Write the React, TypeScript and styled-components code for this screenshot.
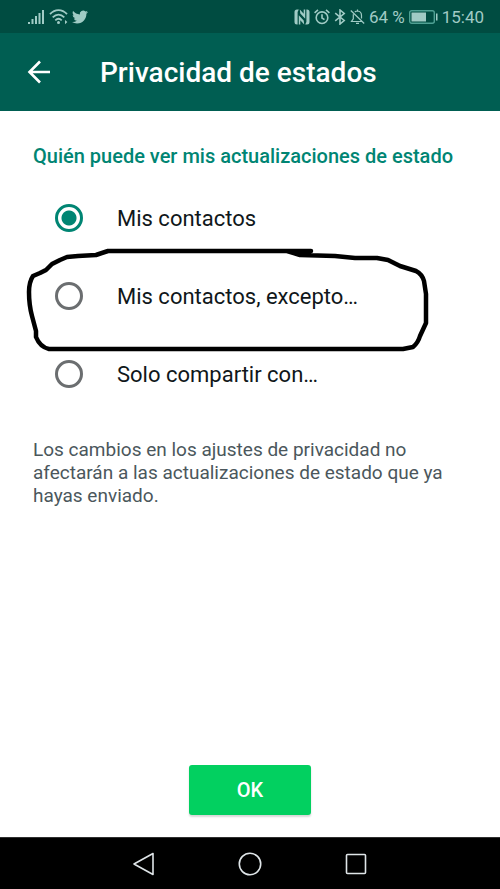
import React, { useState } from "react";
import styled, { createGlobalStyle } from "styled-components";

const GlobalStyle = createGlobalStyle`
  *, *::before, *::after { box-sizing: border-box; }
  body { margin: 0; background: #fff; font-family: Roboto, "Noto Sans", sans-serif; }
`;

const Screen = styled.div`
  display: flex;
  flex-direction: column;
  min-height: 100vh;
  background: #fff;
`;

const StatusBar = styled.div`
  display: flex;
  align-items: center;
  justify-content: space-between;
  height: 33px;
  padding: 0 16px 0 28px;
  background: #004c41;
  color: #a0cbc5;
  font-size: 17px;
  line-height: 20px;
`;

const StatusGroup = styled.div`
  display: flex;
  align-items: center;
  gap: 4px;
`;

const Glyph = styled.svg`
  display: block;
  flex: none;
`;

const AppBar = styled.header`
  display: flex;
  align-items: center;
  gap: 48px;
  height: 78px;
  padding: 0 26px;
  background: #005e52;
  color: #fff;
`;

const IconButton = styled.button`
  display: block;
  padding: 0;
  border: 0;
  background: none;
  color: inherit;
  cursor: pointer;
`;

const Title = styled.h1`
  margin: 0;
  padding-top: 2px;
  font-size: 28px;
  font-weight: 500;
  line-height: 32px;
`;

const Content = styled.main`
  display: flex;
  flex: 1;
  flex-direction: column;
  padding: 33px 33px 22px;
`;

const Options = styled.fieldset`
  min-width: 0;
  margin: 0;
  padding: 0;
  border: 0;
`;

const Legend = styled.legend`
  padding: 0 0 11px;
  color: #008573;
  font-size: 20px;
  font-weight: 500;
  line-height: 24px;
`;

const Option = styled.div`
  position: relative;
  display: flex;
  align-items: center;
  height: 78px;
  padding-left: 22px;
`;

const OptionLabel = styled.label`
  padding: 2px 0 0 34px;
  color: #10171a;
  font-size: 22px;
  line-height: 28px;
  cursor: pointer;
`;

const Radio = styled.input`
  appearance: none;
  flex: none;
  width: 28px;
  height: 28px;
  margin: 0;
  border: 3px solid #6b6e70;
  border-radius: 50%;
  background: #fff;
  cursor: pointer;

  &:checked {
    border-color: #008573;
    background: radial-gradient(circle, #008573 7px, #fff 8px);
  }
`;

const PenMark = styled.svg`
  position: absolute;
  top: -17px;
  left: -13px;
  pointer-events: none;
`;

const Note = styled.p`
  margin: 25px 0;
  color: #4b575c;
  font-size: 19px;
  line-height: 23px;
`;

const OkButton = styled.button`
  align-self: center;
  min-width: 122px;
  height: 50px;
  margin-top: auto;
  border: 0;
  border-radius: 3px;
  background: #02d060;
  box-shadow: 0 2px 2px rgba(0, 0, 0, 0.16);
  color: #fff;
  font-family: inherit;
  font-size: 20px;
  font-weight: 500;
  cursor: pointer;
`;

const NavBar = styled.nav`
  display: flex;
  align-items: center;
  justify-content: center;
  gap: 82px;
  height: 52px;
  border-top: 1px solid #303030;
  background: #000;
  color: #dfe5e8;
`;

const options = [
  { id: "contacts", label: "Mis contactos" },
  { id: "except", label: "Mis contactos, excepto…", marked: true },
  { id: "only", label: "Solo compartir con…" },
];

function SignalIcon() {
  return (
    <Glyph width="17" height="16" viewBox="0 0 17 16" fill="currentColor" aria-hidden="true">
      <path d="M0 13h2v2H0zM3.500 10h2v5h-2zM7 7h2v8H7zM10.500 4h2v11h-2zM14 1h2v14h-2z" />
    </Glyph>
  );
}

function WifiIcon() {
  return (
    <Glyph width="19" height="16" viewBox="0 0 19 16" fill="none" stroke="currentColor" strokeWidth="1.8" aria-hidden="true">
      <path d="M1 5.2C6-.2 13-.2 18 5.2M3.7 8.3c3.6-3.7 8-3.7 11.6 0M6.3 11.3c2.1-2 4.3-2 6.4 0" />
      <circle cx="9.5" cy="13.6" r="1.5" fill="currentColor" stroke="none" />
      <path d="M16 11l2.4 2.1L16 15.2z" fill="currentColor" stroke="none" />
    </Glyph>
  );
}

function TwitterIcon() {
  return (
    <Glyph width="16" height="16" viewBox="0 0 24 24" fill="currentColor" aria-hidden="true">
      <path d="M23.953 4.57a10 10 0 01-2.825.775 4.958 4.958 0 002.163-2.723c-.951.555-2.005.959-3.127 1.184a4.92 4.92 0 00-8.384 4.482C7.69 8.095 4.067 6.13 1.64 3.162a4.822 4.822 0 00-.666 2.475c0 1.71.87 3.213 2.188 4.096a4.904 4.904 0 01-2.228-.616v.06a4.923 4.923 0 003.946 4.827 4.996 4.996 0 01-2.212.085 4.936 4.936 0 004.604 3.417 9.867 9.867 0 01-6.102 2.105c-.39 0-.779-.023-1.17-.067a13.995 13.995 0 007.557 2.209c9.053 0 13.998-7.496 13.998-13.985 0-.21 0-.42-.015-.63A9.935 9.935 0 0024 4.59z" />
    </Glyph>
  );
}

function NfcIcon() {
  return (
    <Glyph width="16" height="16" viewBox="0 0 16 16" fill="currentColor" aria-hidden="true">
      <path d="M3 .5h1.800L3.600 3v12.500H3Q.5 15.500.5 13V3Q.5.500 3 .500z" />
      <path d="M13 15.500h-1.800l1.200-2.500V.5h.6q2.500 0 2.500 2.500v10q0 2.500-2.500 2.500z" />
      <path d="M5.800.5l3.900 4.200V.5h1.500v9.300L6.300 4.500zM10.200 15.500l-3.900-4.200v4.200H4.800V6.200l4.900 5.300z" />
    </Glyph>
  );
}

function AlarmIcon() {
  return (
    <Glyph width="16" height="16" viewBox="0 0 16 16" fill="none" stroke="currentColor" strokeWidth="1.6" aria-hidden="true">
      <circle cx="8" cy="8.700" r="5.800" />
      <path d="M8 5.300v3.700l2.500 1.600M.6 3.800L4 .9M15.400 3.800L12 .9" />
    </Glyph>
  );
}

function BluetoothIcon() {
  return (
    <Glyph width="12" height="16" viewBox="0 0 12 16" fill="none" stroke="currentColor" strokeWidth="1.600" aria-hidden="true">
      <path d="M1.200 4.200l9 7.300L6 15V1l4.200 3.500-9 7.300" />
    </Glyph>
  );
}

function BellOffIcon() {
  return (
    <Glyph width="15" height="16" viewBox="0 0 15 16" fill="none" stroke="currentColor" strokeWidth="1.200" aria-hidden="true">
      <path d="M3.300 5.300v4.500L1.500 12.500h10M4.800 3.200Q5.800 2 7.500 2q4 .3 4 4.500v3M6 14.300h3M7.500.5V2M.8 1.500l13.400 13" />
    </Glyph>
  );
}

function BatteryIcon() {
  return (
    <Glyph width="29" height="14" viewBox="0 0 29 14" aria-hidden="true">
      <rect x=".7" y=".7" width="24.600" height="12.600" rx="2" fill="none" stroke="#4fa194" strokeWidth="1.400" />
      <path d="M2.500 2.500H17v9H2.500zM27 3.500h1.500v7H27z" fill="currentColor" />
    </Glyph>
  );
}

export default function App() {
  const [selected, setSelected] = useState("contacts");

  return (
    <>
      <GlobalStyle />
      <Screen>
        <StatusBar>
          <StatusGroup>
            <SignalIcon />
            <WifiIcon />
            <TwitterIcon />
          </StatusGroup>
          <StatusGroup>
            <NfcIcon />
            <AlarmIcon />
            <BluetoothIcon />
            <BellOffIcon />
            <span>64 %</span>
            <BatteryIcon />
            <time>15:40</time>
          </StatusGroup>
        </StatusBar>

        <AppBar>
          <IconButton type="button" aria-label="Atrás">
            <Glyph width="26" height="26" viewBox="0 0 26 26" fill="none" stroke="currentColor" strokeWidth="2.600">
              <path d="M24 13H4M14 2.500L3.500 13 14 23.500" />
            </Glyph>
          </IconButton>
          <Title>Privacidad de estados</Title>
        </AppBar>

        <Content>
          <Options>
            <Legend>Quién puede ver mis actualizaciones de estado</Legend>
            {options.map(({ id, label, marked }) => (
              <Option key={id}>
                <Radio
                  type="radio"
                  name="audience"
                  id={id}
                  checked={selected === id}
                  onChange={() => setSelected(id)}
                />
                <OptionLabel htmlFor={id}>{label}</OptionLabel>
                {marked && (
                  <PenMark
                    width="416"
                    height="120"
                    viewBox="20 240 416 120"
                    fill="none"
                    stroke="#000"
                    strokeWidth="4.500"
                    strokeLinecap="round"
                    strokeLinejoin="round"
                    aria-hidden="true"
                  >
                    <path d="M311 251H108L96 255 78 256 67 257 60 260 52 264 46 270 40 273 33 276Q29 282 29 292Q29 305 32 316L36 331V337Q40 347 49 349H403L413 347Q418 343 420 336L426 323V294L424 281Q422 274 416 271L400 266 388 260 377 258H355L335 256 300 255 287 251" />
                  </PenMark>
                )}
              </Option>
            ))}
          </Options>
          <Note>
            Los cambios en los ajustes de privacidad no afectarán a las actualizaciones de estado que
            ya hayas enviado.
          </Note>
          <OkButton type="button">OK</OkButton>
        </Content>

        <NavBar>
          <IconButton type="button" aria-label="Volver">
            <Glyph width="24" height="24" viewBox="0 0 24 24" fill="none" stroke="currentColor" strokeWidth="1.600" strokeLinejoin="round">
              <path d="M21 1.500v21L2 12z" />
            </Glyph>
          </IconButton>
          <IconButton type="button" aria-label="Inicio">
            <Glyph width="24" height="24" viewBox="0 0 24 24" fill="none" stroke="currentColor" strokeWidth="1.600">
              <circle cx="12" cy="12" r="10.700" />
            </Glyph>
          </IconButton>
          <IconButton type="button" aria-label="Recientes">
            <Glyph width="24" height="24" viewBox="0 0 24 24" fill="none" stroke="currentColor" strokeWidth="1.600">
              <rect x="2.500" y="2.500" width="19" height="19" rx="1" />
            </Glyph>
          </IconButton>
        </NavBar>
      </Screen>
    </>
  );
}
